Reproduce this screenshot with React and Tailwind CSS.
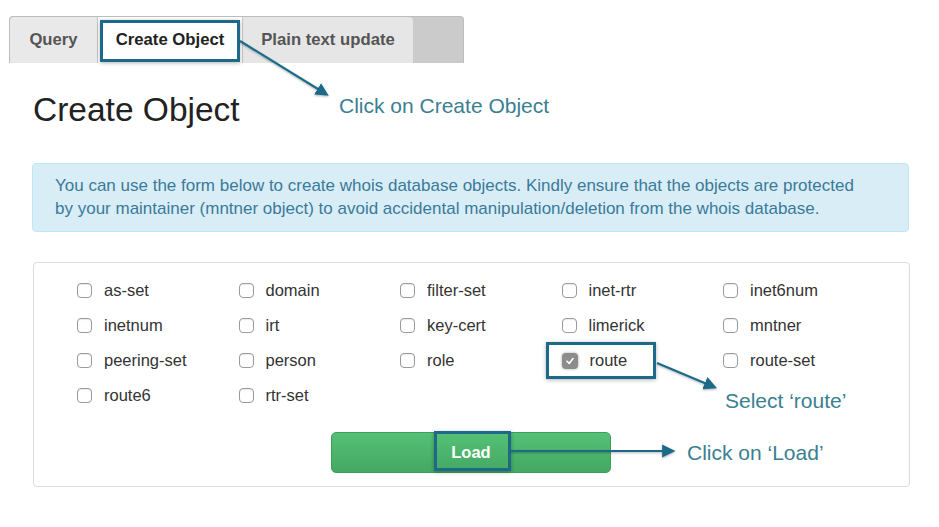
import React from "react";

const rows = [
  ["as-set", "domain", "filter-set", "inet-rtr", "inet6num"],
  ["inetnum", "irt", "key-cert", "limerick", "mntner"],
  ["peering-set", "person", "role", "route", "route-set"],
  ["route6", "rtr-set"],
];

function Box({ checked }) {
  if (checked) {
    return (
      <span className="w-[16px] h-[16px] rounded-[4px] bg-[#8c8c8c] shadow-[0_0_3px_rgba(0,0,0,0.35)] flex items-center justify-center">
        <svg width="10" height="10" viewBox="0 0 10 10">
          <path d="M2 5.2 L4.2 7.4 L8 2.6" fill="none" stroke="#fff" strokeWidth="1.6" strokeLinecap="round" strokeLinejoin="round" />
        </svg>
      </span>
    );
  }
  return <span className="w-[15px] h-[15px] rounded-[4px] border border-[#9a9a9a] bg-white shadow-[inset_0_1px_1px_rgba(0,0,0,0.08)]" />;
}

export default function App() {
  return (
    <div className="relative w-[939px] h-[527px] bg-white overflow-hidden" style={{ fontFamily: '"Liberation Sans", Arial, sans-serif' }}>
      {/* Tabs */}
      <div className="ml-[9px] mt-[16px] w-[455px] h-[47px] bg-[#cbcbcb] rounded-t-[4px] border border-[#bdbdbd] border-b-0 flex items-end">
        <div className="w-[88px] h-[46px] bg-[#e9e9e9] border-r border-[#c8c8c8] rounded-tl-[4px] flex items-center justify-center text-[16.7px] font-bold text-[#555]">
          Query
        </div>
        <div className="w-[145px] h-[46px] bg-white border-r border-[#c8c8c8] flex items-center justify-center text-[16.7px] font-bold text-[#222]">
          Create Object
        </div>
        <div className="w-[170px] h-[46px] bg-[#e6e6e6] rounded-tr-[4px] flex items-center justify-center text-[16.7px] font-bold text-[#555]">
          Plain text update
        </div>
      </div>

      <h1 className="ml-[33px] mt-[27px] text-[33.5px] leading-[40px] text-[#222]">Create Object</h1>

      <div className="ml-[32px] mt-[33px] w-[877px] h-[69px] bg-[#d9edf7] border border-[#bce8f1] rounded-[4px] pl-[22px] pt-[10px] text-[17px] leading-[23px] text-[#3a7a99]">
        <p>You can use the form below to create whois database objects. Kindly ensure that the objects are protected</p>
        <p>by your maintainer (mntner object) to avoid accidental manipulation/deletion from the whois database.</p>
      </div>

      <div className="ml-[33px] mt-[30px] w-[877px] h-[225px] border border-[#dcdcdc] rounded-[4px] pt-[10px] pl-[43px]">
        <div className="flex flex-col">
          {rows.map((r, i) => (
            <div key={i} className="flex h-[35px] items-center">
              {r.map((name) => (
                <div key={name} className="w-[161.5px] flex items-center gap-[12px] text-[16.5px] text-[#333]">
                  <Box checked={name === "route"} />
                  <span>{name}</span>
                </div>
              ))}
            </div>
          ))}
        </div>
        <div className="ml-[254px] mt-[19px] w-[280px] h-[41px] rounded-[5px] bg-gradient-to-b from-[#54c177] to-[#44a862] border border-[#3f9d5a] flex items-center justify-center text-white font-bold text-[16.5px]">
          Load
        </div>
      </div>

      {/* Annotation highlight boxes */}
      <div className="absolute left-[100px] top-[20px] w-[140px] h-[42px] border-[3px] border-[#1d6a88] shadow-[0_1px_4px_rgba(0,0,0,0.3)]" />
      <div className="absolute left-[546px] top-[342px] w-[110px] h-[37px] border-[3px] border-[#1d6a88] shadow-[0_1px_4px_rgba(0,0,0,0.3)]" />
      <div className="absolute left-[434px] top-[431px] w-[77px] h-[40px] border-[3px] border-[#1d6a88] shadow-[0_1px_4px_rgba(0,0,0,0.3)]" />

      {/* Annotation texts */}
      <div className="absolute left-[339px] top-[90px] text-[21px] text-[#3a7f91]">Click on Create Object</div>
      <div className="absolute left-[725px] top-[385px] text-[21px] text-[#3a7f91]">Select ‘route’</div>
      <div className="absolute left-[687px] top-[437px] text-[21px] text-[#3a7f91]">Click on ‘Load’</div>

      {/* Arrows */}
      <svg className="absolute left-0 top-0" width="939" height="527" viewBox="0 0 939 527">
        <defs>
          <marker id="ah" markerWidth="6" markerHeight="6" refX="4.5" refY="3" orient="auto" markerUnits="strokeWidth">
            <path d="M0 0 L6 3 L0 6 Z" fill="#1d6a88" />
          </marker>
          <filter id="sh" x="-10%" y="-10%" width="120%" height="120%">
            <feDropShadow dx="0" dy="1" stdDeviation="1.2" floodColor="#000" floodOpacity="0.3" />
          </filter>
        </defs>
        <g filter="url(#sh)" stroke="#1d6a88" strokeWidth="2.2" fill="none">
          <line x1="240" y1="41" x2="326" y2="94" markerEnd="url(#ah)" />
          <line x1="657" y1="363" x2="714" y2="387" markerEnd="url(#ah)" />
          <line x1="511" y1="451" x2="672" y2="451" markerEnd="url(#ah)" />
        </g>
      </svg>
    </div>
  );
}
